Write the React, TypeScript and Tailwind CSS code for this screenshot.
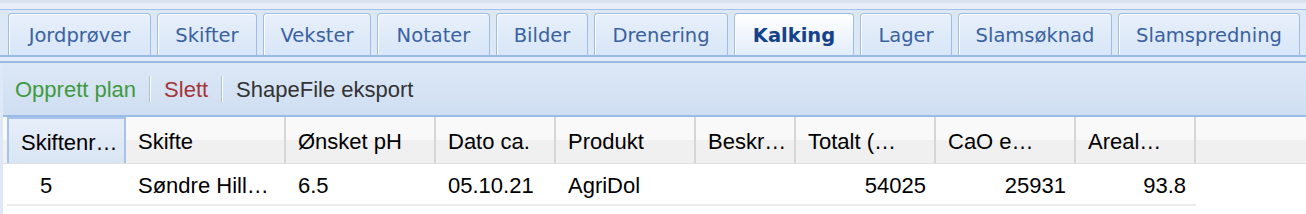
import React from 'react';

const tabs = [
  { label: 'Jordprøver', w: 'w-[143px]' },
  { label: 'Skifter', w: 'w-[100px]' },
  { label: 'Vekster', w: 'w-[108px]' },
  { label: 'Notater', w: 'w-[113px]' },
  { label: 'Bilder', w: 'w-[92px]' },
  { label: 'Drenering', w: 'w-[134px]' },
  { label: 'Kalking', w: 'w-[120px]', active: true },
  { label: 'Lager', w: 'w-[92px]' },
  { label: 'Slamsøknad', w: 'w-[154px]' },
  { label: 'Slamspredning', w: 'w-[182px]' },
];

const columns = [
  { title: 'Skiftenr…', w: 'w-[119px]', sorted: true },
  { title: 'Skifte', w: 'w-[160px]' },
  { title: 'Ønsket pH', w: 'w-[150px]' },
  { title: 'Dato ca.', w: 'w-[120px]' },
  { title: 'Produkt', w: 'w-[140px]' },
  { title: 'Beskr…', w: 'w-[100px]' },
  { title: 'Totalt (…', w: 'w-[140px]' },
  { title: 'CaO e…', w: 'w-[140px]' },
  { title: 'Areal…', w: 'w-[120px]' },
];

const row = ['5', 'Søndre Hill…', '6.5', '05.10.21', 'AgriDol', '', '54025', '25931', '93.8'];

export default function App() {
  return (
    <div className="w-[1306px] h-[214px] overflow-hidden bg-[#dfe8f6] flex flex-col font-['Liberation_Sans',Arial,sans-serif]">
      {/* Tab strip */}
      <div className="h-[3px] bg-[#d9e3ef]" />
      <div className="h-[6px] bg-[#e9eff8]" />
      <div className="h-px bg-[#a3c0e6]" />
      <div className="flex items-end gap-[6px] pl-[8px] pt-[3px] bg-[#dde8f6]">
        {tabs.map(t => (
          <div
            key={t.label}
            className={`${t.w} h-[42px] shrink-0 rounded-t-[4px] border border-b-0 border-[#9dbce6] shadow-[inset_1px_1px_0_#ffffff] flex items-center justify-center pt-[2px] font-['DejaVu_Sans',Verdana,sans-serif] text-[19.5px] ${
              t.active
                ? 'bg-linear-to-b from-[#ffffff] to-[#e3edfa] text-[#15428b] font-bold'
                : 'bg-linear-to-b from-[#e8f0fa] to-[#d8e6f8] text-[#3a62a0]'
            }`}
          >
            {t.label}
          </div>
        ))}
      </div>
      <div className="h-[2px] bg-[#99bbe8]" />
      <div className="h-[4px] bg-[#e4ecf7]" />
      <div className="h-[2px] bg-[#99bbe8]" />

      {/* Content */}
      <div className="flex-1 pl-[3px] flex flex-col">
        <div className="flex-1 bg-white flex flex-col">
          {/* Toolbar */}
          <div className="h-[54px] shrink-0 border-b-2 border-[#99bbe8] bg-linear-to-b from-[#dce8f6] to-[#cfdef2] flex items-center pl-[12px] text-[22px]">
            <span className="text-[#3f9a3f]">Opprett plan</span>
            <span className="ml-[13px] mr-[13px] w-[2px] h-[26px] bg-[#a7c2e6] border-r border-white" />
            <span className="text-[#a33636]">Slett</span>
            <span className="ml-[13px] mr-[13px] w-[2px] h-[26px] bg-[#a7c2e6] border-r border-white" />
            <span className="text-[#333333]">ShapeFile eksport</span>
          </div>

          {/* Grid header */}
          <div className="h-[47px] shrink-0 flex pl-[4px] bg-[linear-gradient(to_bottom,#f9f9f9_50%,#f0f0f0_50%)] border-b border-[#e0e0e0] text-[22px] text-black">
            {columns.map(c => (
              <div
                key={c.title}
                className={`${c.w} shrink-0 flex items-center pl-[12px] pt-[2px] overflow-hidden whitespace-nowrap ${
                  c.sorted
                    ? 'bg-linear-to-b from-[#e6eef9] to-[#dae5f4] border-x-2 border-t-2 border-[#a9c3e8]'
                    : 'border-r-2 border-[#d6d6d6]'
                }`}
              >
                {c.title}
              </div>
            ))}
            <div className="flex-1" />
          </div>

          {/* Data row */}
          <div className="flex pl-[4px]">
            <div className="flex h-[42px] border-b-2 border-[#ebebeb] text-[22px] text-black">
              {columns.map((c, i) => (
                <div
                  key={c.title}
                  className={`${c.w} shrink-0 flex items-center pt-[2px] overflow-hidden whitespace-nowrap ${
                    i === 0 ? 'pl-[33px]' : i >= 6 ? 'justify-end pr-[10px]' : 'pl-[12px]'
                  }`}
                >
                  {row[i]}
                </div>
              ))}
            </div>
          </div>
        </div>
      </div>
    </div>
  );
}
